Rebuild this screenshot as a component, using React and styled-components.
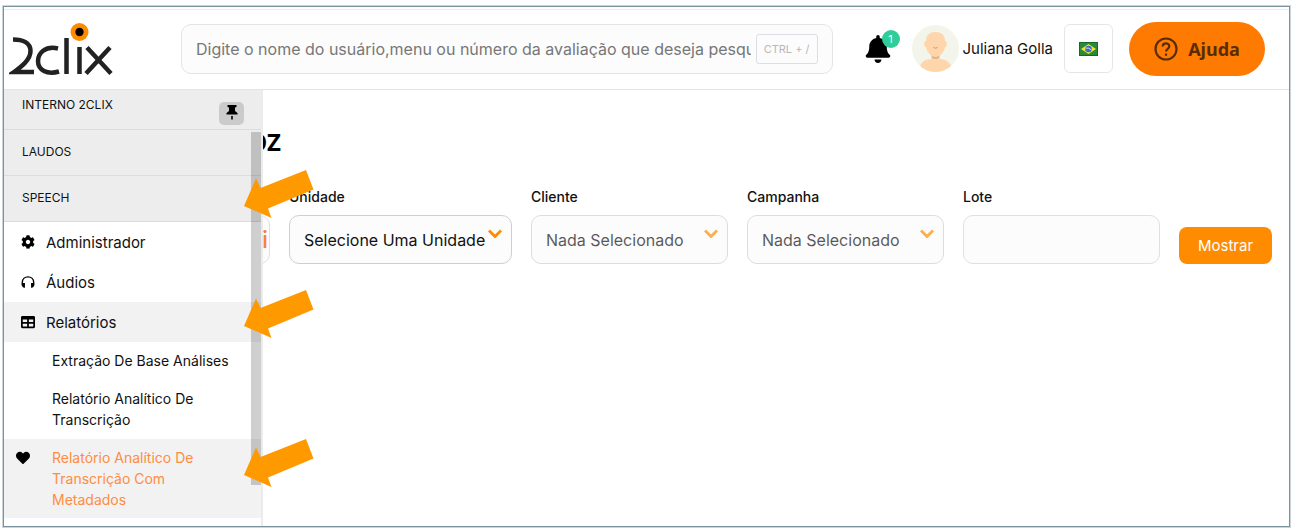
import React from 'react';
import styled, { createGlobalStyle } from 'styled-components';
import { FaBell, FaCog, FaHeart, FaTable } from 'react-icons/fa';

const App = () => {
  return (
    <Page>
      <GlobalStyle />
      <Frame>
        <Header>
          <LogoLink href="#" aria-label="2clix">
            <Logo />
          </LogoLink>
          <SearchBox>
            <SearchInput
              type="text"
              aria-label="Pesquisar"
              placeholder="Digite o nome do usuário,menu ou número da avaliação que deseja pesquisar"
            />
            <Shortcut>CTRL + /</Shortcut>
          </SearchBox>
          <BellButton aria-label="Notificações">
            <FaBell />
            <Badge>1</Badge>
          </BellButton>
          <User href="#">
            <Avatar />
            Juliana Golla
          </User>
          <FlagButton aria-label="Idioma">
            <Flag />
          </FlagButton>
          <HelpButton>
            <HelpIcon />
            Ajuda
          </HelpButton>
        </Header>
        <Body>
          <Sidebar>
            <Section $first href="#">INTERNO 2CLIX</Section>
            <Section href="#">LAUDOS</Section>
            <Section href="#">
              SPEECH
              <Arrow $top={-6} />
            </Section>
            <MenuItem href="#">
              <FaCog />
              Administrador
            </MenuItem>
            <MenuItem href="#">
              <Headphones />
              Áudios
            </MenuItem>
            <MenuItem href="#" $open>
              <FaTable />
              Relatórios
              <Arrow $top={-12} />
            </MenuItem>
            <SubMenu>
              <SubItem href="#">Extração De Base Análises</SubItem>
              <SubItem href="#">Relatório Analítico De Transcrição</SubItem>
              <SubItem href="#" $active>
                <FaHeart />
                Relatório Analítico De Transcrição Com Metadados
                <Arrow $top={0} />
              </SubItem>
            </SubMenu>
            <PinButton aria-label="Fixar menu">
              <Pin />
            </PinButton>
            <ScrollThumb />
          </Sidebar>
          <Main>
            <Title>OZ</Title>
            <Filters>
              <Field>
                <PeriodInput type="text" aria-label="Período" defaultValue="i" />
              </Field>
              <Field>
                <Label htmlFor="unidade">Unidade</Label>
                <SelectBox>
                  <Select id="unidade">
                    <option>Selecione Uma Unidade</option>
                  </Select>
                  <Chevron />
                </SelectBox>
              </Field>
              <Field>
                <Label htmlFor="cliente">Cliente</Label>
                <SelectBox $disabled>
                  <Select id="cliente" disabled>
                    <option>Nada Selecionado</option>
                  </Select>
                  <Chevron />
                </SelectBox>
              </Field>
              <Field>
                <Label htmlFor="campanha">Campanha</Label>
                <SelectBox $disabled>
                  <Select id="campanha" disabled>
                    <option>Nada Selecionado</option>
                  </Select>
                  <Chevron />
                </SelectBox>
              </Field>
              <Field>
                <Label htmlFor="lote">Lote</Label>
                <TextInput id="lote" type="text" />
              </Field>
              <ShowButton>Mostrar</ShowButton>
            </Filters>
          </Main>
        </Body>
      </Frame>
    </Page>
  );
};

export default App;

const Logo = () => (
  <svg width="104" height="54" viewBox="0 0 104 54" fill="none" stroke="#222" strokeWidth="4.5">
    <path d="M4 17.500C14 17.500 21.500 21 21.500 29C21.500 38 12 45 5 50H25" />
    <path d="M49 26.500C36 23.500 29 31.500 29 39C29 48 38 53 50 49.500" />
    <path d="M57.500 16V52M70.500 25V52" />
    <path d="M78 25.500L102 51.500M101 25.500L77 51.500" />
    <circle cx="70.500" cy="10" r="9" fill="#ff8c00" stroke="none" />
    <circle cx="70.500" cy="10" r="4.200" fill="#000" stroke="none" />
  </svg>
);

const Avatar = () => (
  <svg width="47" height="47" viewBox="0 0 47 47">
    <defs>
      <clipPath id="avatar">
        <circle cx="23.5" cy="23.5" r="23.5" />
      </clipPath>
    </defs>
    <g clipPath="url(#avatar)">
      <rect width="47" height="47" fill="#f3f4ea" />
      <path d="M7 47C7 38 12 34 20 34H27C35 34 40 38 40 47Z" fill="#ffd5ab" />
      <path d="M19 27H28V34Q23.500 37 19 34Z" fill="#ffd5ab" />
      <path d="M20 31H27V33Q23.500 35 20 33Z" fill="#ddb48d" />
      <path d="M14 16C14 10 18 7 23.500 7S33 10 33 16C36 17 35 22 33 22C32 28 27 32 23.500 32S15 28 14 22C12 22 11 17 14 16Z" fill="#ffd5ab" />
      <path d="M21.500 22.500Q23.500 24 25.500 22.500" fill="none" stroke="#c99c72" />
    </g>
  </svg>
);

const Flag = () => (
  <svg width="19" height="14" viewBox="0 0 19 14">
    <rect width="19" height="14" fill="#14692a" />
    <rect x="1" y="1" width="17" height="12" fill="#2c8a35" />
    <path d="M9.500 2L17 7L9.500 12L2 7Z" fill="#e9e53b" />
    <circle cx="9.500" cy="7" r="3.300" fill="#3e6cc0" />
    <path d="M6.500 6Q10 5.500 12.500 8" fill="none" stroke="#cfe0f5" />
  </svg>
);

const HelpIcon = () => (
  <svg width="24" height="24" viewBox="0 0 24 24" fill="none" stroke="#5a2c05" strokeWidth="2.200">
    <circle cx="12" cy="12" r="10.500" />
    <path d="M8.700 9.500C8.700 5.300 15.300 5.300 15.300 9.300C15.300 11.800 12 11.800 12 14.500" />
    <path d="M12 16.500V18.800" />
  </svg>
);

const Headphones = () => (
  <svg viewBox="0 0 16 16">
    <path d="M1.500 12V8.500C1.500 0 14.500 0 14.500 8.500V12" fill="none" stroke="#000" strokeWidth="1.600" />
    <path d="M1 9H4.500V14.500H3.500Q1 14 1 11ZM15 9H11.500V14.500H12.500Q15 14 15 11Z" />
  </svg>
);

const Pin = () => (
  <svg width="12" height="15" viewBox="0 0 12 15">
    <path d="M1.500 0H10.500V2L9 2.500V6L11.500 8V9.500H.5V8L3 6V2.500L1.500 2ZM5.200 11H6.800V14L6 15L5.200 14Z" />
  </svg>
);

const Chevron = () => (
  <ChevronIcon width="14" height="10" viewBox="0 0 14 10" fill="none" stroke="#ff8c00" strokeWidth="2.800">
    <path d="M1 1.500L7 7.500L13 1.500" />
  </ChevronIcon>
);

const Arrow = ({ $top }) => (
  <ArrowIcon $top={$top} width="70" height="49" viewBox="0 0 70 49" fill="#ff9900">
    <path d="M0 36L12 8.500L16.500 18L62 0L69.500 19.500L24 38.500L27.500 48Z" />
  </ArrowIcon>
);

const GlobalStyle = createGlobalStyle`
  * {
    box-sizing: border-box;
  }

  body {
    margin: 0;
    background: #fff;
    color: #111;
    font-family: Inter, "Open Sans", sans-serif;
    font-size: 15px;
  }

  button, input, select {
    font-family: inherit;
  }

  a {
    color: inherit;
    text-decoration: none;
  }
`;

const Page = styled.div`
  display: flex;
  min-height: 100vh;
  padding: 6px 2px 5px 3px;
`;

const Frame = styled.div`
  display: flex;
  flex: 1;
  min-width: 0;
  flex-direction: column;
  border: 1px solid #7b939e;
  box-shadow: 0 0 0 1px #c9d5da;
`;

const Header = styled.header`
  display: flex;
  align-items: center;
  height: 81px;
  margin-top: 2px;
  padding: 0 24px 2px 5px;
  border-top: 1px solid #ececec;
  border-bottom: 1px solid #e4e4e4;
`;

const LogoLink = styled.a`
  display: flex;
  margin-right: 68px;
`;

const SearchBox = styled.div`
  display: flex;
  flex: 1;
  align-items: center;
  min-width: 0;
  height: 50px;
  padding: 0 14px;
  border: 1px solid #e4e4e8;
  border-radius: 10px;
  background: #fcfcfc;
`;

const SearchInput = styled.input`
  flex: 1;
  min-width: 0;
  margin-right: 5px;
  padding: 0;
  border: 0;
  outline: 0;
  background: transparent;
  font-size: 16px;

  &::placeholder {
    color: #777;
  }
`;

const Shortcut = styled.span`
  padding: 6px 7px;
  border: 1px solid #dddde5;
  border-radius: 3px;
  color: #b8b8b8;
  font-size: 11px;
  line-height: 16px;
`;

const BellButton = styled.button`
  position: relative;
  display: flex;
  margin-left: 31px;
  padding: 0;
  border: 0;
  background: none;
  color: #000;
  font-size: 28px;
`;

const Badge = styled.span`
  position: absolute;
  top: -5px;
  right: -8px;
  width: 18px;
  height: 18px;
  border-radius: 50%;
  background: #2fce98;
  color: #fff;
  font-size: 11px;
  line-height: 18px;
`;

const User = styled.a`
  display: flex;
  align-items: center;
  gap: 4px;
  margin-left: 20px;
  white-space: nowrap;
`;

const FlagButton = styled.button`
  display: flex;
  align-items: center;
  justify-content: center;
  width: 49px;
  height: 49px;
  margin-left: 11px;
  border: 1px solid #e6e6e6;
  border-radius: 6px;
  background: #fff;
`;

const HelpButton = styled.button`
  display: flex;
  align-items: center;
  justify-content: center;
  gap: 10px;
  width: 136px;
  height: 54px;
  margin-left: 16px;
  border: 0;
  border-radius: 27px;
  background: #ff7a00;
  color: #5a2c05;
  font-family: "Noto Sans", sans-serif;
  font-size: 18px;
  font-weight: 700;
`;

const Body = styled.div`
  position: relative;
  flex: 1;
`;

const Sidebar = styled.nav`
  position: absolute;
  top: 0;
  bottom: 0;
  left: 0;
  z-index: 1;
  width: 259px;
  border-right: 2px solid #ebebeb;
  background: #fff;
`;

const Section = styled.a`
  position: relative;
  display: block;
  padding: ${({ $first }) => ($first ? '5px 18px 14px' : '12px 18px 13px')};
  border-bottom: 1px solid #dcdcdc;
  background: #ededed;
  font-size: 12px;
  line-height: 20px;
`;

const MenuItem = styled.a`
  position: relative;
  display: flex;
  align-items: center;
  gap: 11px;
  height: 40px;
  padding-left: 17px;
  background: ${({ $open }) => ($open ? '#f2f2f2' : '#fff')};

  > svg:first-child {
    width: 14px;
    height: 14px;
    color: #000;
  }
`;

const SubMenu = styled.div`
  display: flex;
  flex-direction: column;
  gap: 1px;
`;

const SubItem = styled.a`
  position: relative;
  padding: 8px 24px 8px 48px;
  background: ${({ $active }) => ($active ? '#f2f2f2' : '#fff')};
  color: ${({ $active }) => ($active ? '#ff8c42' : '#111')};
  font-size: 14px;
  line-height: 21px;

  > svg:first-child {
    position: absolute;
    top: 12px;
    left: 12px;
    width: 14px;
    height: 14px;
    color: #000;
  }
`;

const ArrowIcon = styled.svg`
  position: absolute;
  top: ${({ $top }) => $top}px;
  left: 240px;
  z-index: 2;
`;

const PinButton = styled.button`
  position: absolute;
  top: 12px;
  right: 17px;
  display: flex;
  justify-content: center;
  width: 25px;
  height: 23px;
  padding: 3px 0 0;
  border: 0;
  border-radius: 5px;
  background: #cbcbcb;
`;

const ScrollThumb = styled.div`
  position: absolute;
  top: 42px;
  right: 0;
  width: 10px;
  height: 353px;
  background: rgba(0, 0, 0, 0.19);
`;

const Main = styled.main`
  padding: 36px 17px 0 69px;
`;

const Title = styled.h1`
  width: 208px;
  margin: 0;
  color: #000;
  font-family: "Noto Sans", sans-serif;
  font-size: 24px;
  line-height: 32px;
  text-align: right;
`;

const Filters = styled.form`
  display: grid;
  grid-template-columns: 1fr 223px 1fr 1fr 1fr auto;
  align-items: end;
  gap: 19px;
  margin-top: 29px;
`;

const Field = styled.div`
  display: flex;
  flex-direction: column;
  min-width: 0;
`;

const Label = styled.label`
  margin-bottom: 8px;
  font-size: 14px;
  font-weight: 500;
  line-height: 20px;
`;

const TextInput = styled.input`
  width: 100%;
  height: 49px;
  padding: 0 14px;
  border: 1px solid #e0e0e0;
  border-radius: 10px;
  background: #fcfcfc;
`;

const PeriodInput = styled(TextInput)`
  padding: 0 1px;
  color: #f4813d;
  font-size: 24px;
  font-weight: 500;
  text-align: right;
`;

const SelectBox = styled.div`
  position: relative;
  opacity: ${({ $disabled }) => ($disabled ? 0.7 : 1)};
`;

const Select = styled.select`
  appearance: none;
  width: 100%;
  height: 49px;
  padding: 0 14px;
  border: 1px solid #cfcfcf;
  border-radius: 10px;
  background: #fcfcfc;
  color: #111;
  font-size: 16px;
  opacity: 1;
`;

const ChevronIcon = styled.svg`
  position: absolute;
  top: 14px;
  right: 10px;
  pointer-events: none;
`;

const ShowButton = styled.button`
  width: 93px;
  height: 37px;
  border: 0;
  border-radius: 8px;
  background: #ff8c00;
  color: #fff;
  font-size: 15px;
`;
